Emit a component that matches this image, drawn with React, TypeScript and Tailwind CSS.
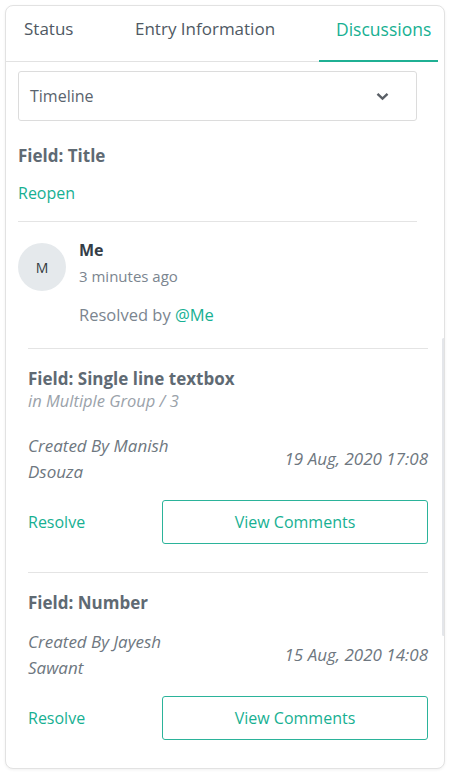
import React from "react";

const GREEN = "text-[#17b092]";

function Item({
  title,
  sub,
  by1,
  by2,
  date,
  last,
}: {
  title: string;
  sub?: string;
  by1: string;
  by2: string;
  date: string;
  last?: boolean;
}) {
  return (
    <div className={`border-t border-[#e4e4e4] pt-[19px] ${last ? "pb-[27px]" : "pb-[28px]"}`}>
      <div className="text-[17px] leading-[22px] font-bold text-[#5f6a73]">{title}</div>
      {sub && (
        <div className="text-[16.5px] leading-[22px] italic text-[#9aa2aa]">{sub}</div>
      )}
      <div className={`flex items-center justify-between ${sub ? "mt-[21px]" : "mt-[15px]"}`}>
        <div className="w-[180px] text-[17px] leading-[26px] italic text-[#6e7780]">
          <div>{by1}</div>
          <div>{by2}</div>
        </div>
        <div className="text-[17px] leading-[26px] italic text-[#6e7780]">{date}</div>
      </div>
      <div className="mt-[15px] flex items-center justify-between">
        <span className={`text-[16px] ${GREEN}`}>Resolve</span>
        <button className={`w-[266px] h-[44px] rounded-[3px] border-[1.5px] border-[#2bb39a] bg-white text-[16px] ${GREEN}`}>
          View Comments
        </button>
      </div>
    </div>
  );
}

export default function App() {
  return (
    <div
      className="w-[450px] h-[773px] bg-white p-[5px]"
      style={{ fontFamily: "'Open Sans', 'Noto Sans', sans-serif" }}
    >
      <div className="w-[440px] h-[764px] rounded-[8px] border border-[#e2e2e2] shadow-[0_1px_3px_rgba(0,0,0,0.06)] bg-white overflow-hidden">
        {/* Tabs */}
        <div className="flex h-[56px] w-[432px] border-b border-[#e2e2e2] text-[17px] leading-[24px]">
          <div className="w-[113px] pl-[18px] pt-[11px] text-[#4f5963]">Status</div>
          <div className="w-[200px] pl-[16px] pt-[11px] text-[#4f5963]">Entry Information</div>
          <div className="relative w-[119px] pl-[17px] pt-[11px] text-[17.5px] text-[#17b092]">
            Discussions
            <div className="absolute left-0 right-0 bottom-[-1px] h-[2px] bg-[#1fb094]" />
          </div>
        </div>

        {/* Top area */}
        <div className="pl-[12px] w-[411px]">
          <div className="mt-[9px] h-[50px] w-[399px] rounded-[3px] border border-[#dcdcdc] flex items-center justify-between pl-[11px] pr-[27px]">
            <span className="text-[16px] text-[#5a646e]">Timeline</span>
            <svg width="13" height="9" viewBox="0 0 13 9" fill="none">
              <path d="M1.5 1.8 L6.5 6.6 L11.5 1.8" stroke="#5a5f66" strokeWidth="2.4" />
            </svg>
          </div>

          <div className="mt-[24px] text-[17px] leading-[22px] font-bold text-[#5f6a73]">Field: Title</div>
          <div className={`mt-[15px] text-[16px] leading-[22px] ${GREEN}`}>Reopen</div>

          <div className="mt-[17px] border-t border-[#e4e4e4] pt-[17px] flex items-start">
            <div className="mt-[4px] w-[48px] h-[48px] rounded-full bg-[#e5e9ec] flex items-center justify-center text-[14px] text-[#333a40]">
              M
            </div>
            <div className="ml-[13px]">
              <div className="text-[16px] leading-[22px] font-bold text-[#343d47]">Me</div>
              <div className="mt-[4px] text-[15px] leading-[22px] text-[#7b858f]">3 minutes ago</div>
              <div className="mt-[17px] text-[16.5px] leading-[22px] text-[#7b858f]">
                Resolved by <span className={GREEN}>@Me</span>
              </div>
            </div>
          </div>
        </div>

        {/* List */}
        <div className="relative mt-[12px] pt-[10px]">
          <div className="absolute right-[-1px] top-0 w-[3px] h-[298px] rounded-full bg-[#e4e6ea]" />
          <div className="ml-[22px] w-[400px]">
            <Item
              title="Field: Single line textbox"
              sub="in Multiple Group / 3"
              by1="Created By Manish"
              by2="Dsouza"
              date="19 Aug, 2020 17:08"
            />
            <Item
              title="Field: Number"
              by1="Created By Jayesh"
              by2="Sawant"
              date="15 Aug, 2020 14:08"
              last
            />
          </div>
        </div>
      </div>
    </div>
  );
}
